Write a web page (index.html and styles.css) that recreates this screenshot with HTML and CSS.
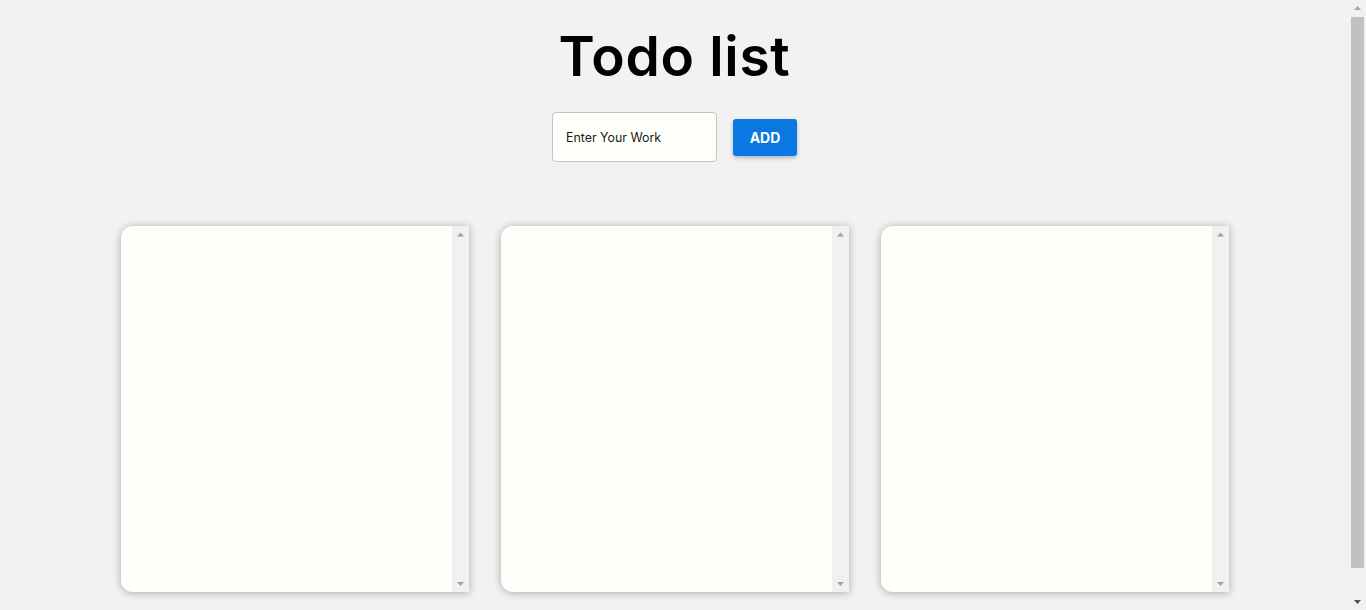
FILE: index.html
```html
<!DOCTYPE html>
<html>
<head>
<meta charset="utf-8">
<title>Todo list</title>
<link rel="stylesheet" href="styles.css">
</head>
<body>
<div class="app">
  <h1 class="title">Todo list</h1>
  <div class="form">
    <input class="work-input" type="text" placeholder="Enter Your Work">
    <button class="add-btn">ADD</button>
  </div>
  <div class="boards">
    <div class="board">
      <div class="board-body"></div>
      <div class="scrollbar">
        <svg class="arrow" viewBox="0 0 17 17" width="17" height="17"><polygon points="5,10.5 8.5,6.5 12,10.5" /></svg>
        <div class="track"></div>
        <svg class="arrow" viewBox="0 0 17 17" width="17" height="17"><polygon points="5,7 12,7 8.5,11" /></svg>
      </div>
    </div>
    <div class="board">
      <div class="board-body"></div>
      <div class="scrollbar">
        <svg class="arrow" viewBox="0 0 17 17" width="17" height="17"><polygon points="5,10.5 8.5,6.5 12,10.5" /></svg>
        <div class="track"></div>
        <svg class="arrow" viewBox="0 0 17 17" width="17" height="17"><polygon points="5,7 12,7 8.5,11" /></svg>
      </div>
    </div>
    <div class="board">
      <div class="board-body"></div>
      <div class="scrollbar">
        <svg class="arrow" viewBox="0 0 17 17" width="17" height="17"><polygon points="5,10.5 8.5,6.5 12,10.5" /></svg>
        <div class="track"></div>
        <svg class="arrow" viewBox="0 0 17 17" width="17" height="17"><polygon points="5,7 12,7 8.5,11" /></svg>
      </div>
    </div>
  </div>
</div>
<div class="scrollbar page-scrollbar">
  <svg class="arrow" viewBox="0 0 17 17" width="17" height="17"><polygon points="5,10 8.5,6 12,10" /></svg>
  <div class="track"><div class="thumb"></div></div>
  <svg class="arrow active" viewBox="0 0 17 17" width="17" height="17"><polygon points="5,7 12,7 8.5,11" /></svg>
</div>
</body>
</html>
```
FILE: styles.css
```css
html, body {
  margin: 0;
  padding: 0;
  background: #f2f2f2;
  font-family: Inter, "Liberation Sans", sans-serif;
}
body {
  display: flex;
  height: 610px;
  overflow: hidden;
}
.app {
  flex: 1;
  display: flex;
  flex-direction: column;
  align-items: center;
  padding-top: 23px;
}
.title {
  margin: 0;
  font-size: 55px;
  font-weight: 600;
  line-height: 66px;
  color: #000;
  letter-spacing: 0.7px;
}
.form {
  margin-top: 23px;
  display: flex;
  align-items: flex-start;
  gap: 16px;
}
.work-input {
  box-sizing: border-box;
  width: 165px;
  height: 50px;
  border: 1px solid #c4c4c4;
  border-radius: 4px;
  background: #fffffb;
  padding: 0 13px;
  font-family: inherit;
  font-size: 12.4px;
  outline: none;
}
.work-input::placeholder {
  color: #1a1a1a;
}
.add-btn {
  margin-top: 7px;
  width: 64px;
  height: 37px;
  border: none;
  border-radius: 3px;
  background: #0a78e2;
  color: #fff;
  font-family: inherit;
  font-weight: 700;
  font-size: 14px;
  box-shadow: 0 2px 4px rgba(0,0,0,0.25);
}
.boards {
  margin-top: 64px;
  display: flex;
  gap: 32px;
}
.board {
  width: 348px;
  height: 366px;
  display: flex;
  background: #fefefa;
  border-radius: 12px 0 0 12px;
  box-shadow: 0 1px 8px rgba(0,0,0,0.3);
}
.board-body {
  flex: 1;
}
.scrollbar {
  width: 17px;
  flex: none;
  display: flex;
  flex-direction: column;
  background: #f1f1f1;
}
.arrow {
  display: block;
  flex: none;
  fill: #a3a3a3;
}
.arrow.active {
  fill: #505050;
}
.track {
  flex: 1;
}
.page-scrollbar {
  height: 610px;
}
.thumb {
  height: 551px;
  margin: 0 2px;
  background: #c1c1c1;
}
```
